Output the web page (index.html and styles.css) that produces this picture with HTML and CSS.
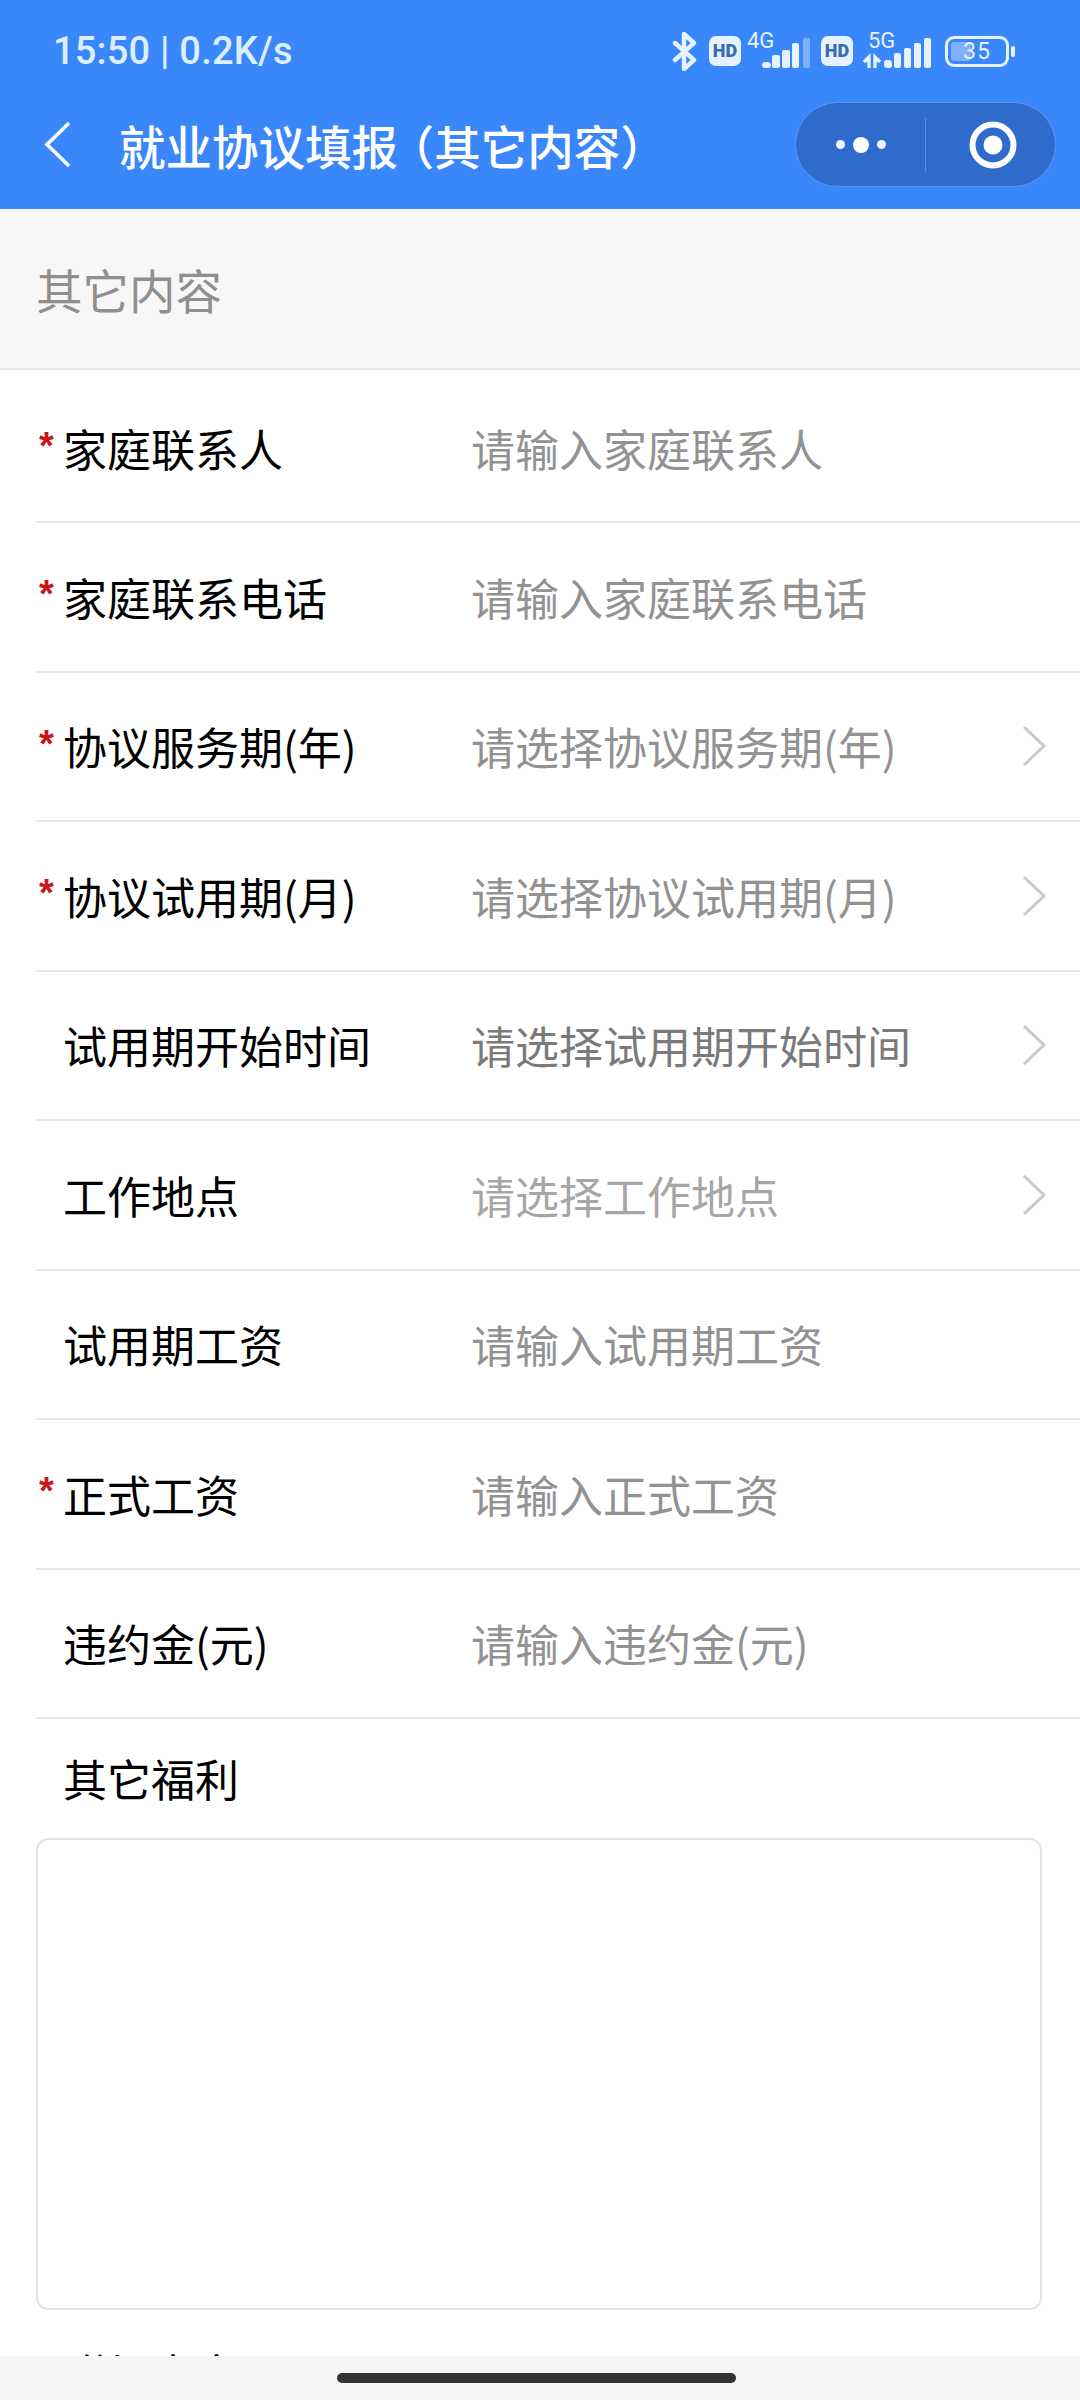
FILE: index.html
```html
<!DOCTYPE html>
<html lang="zh-CN">

<head>
  <meta charset="UTF-8">
  <meta name="viewport" content="width=device-width, initial-scale=1.0">
  <title>就业协议填报（其它内容）</title>
  <link rel="stylesheet" href="styles.css">
</head>

<body>
  <div id="page">
    <header>
      <div class="statusBar">
        <span class="time">15:50 | 0.2K/s</span>
        <div class="statusIcons">
          <svg class="bluetooth" width="25" height="39" viewBox="0 0 25 39">
            <path d="M3 11 L22 28 L12 37 V2 L22 11 L3 28" fill="none" stroke="#e6f2ff" stroke-width="4.4" stroke-linejoin="round" stroke-linecap="round"/>
          </svg>
          <span class="hd">HD</span>
          <svg class="signal" width="68" height="42" viewBox="0 -6 68 42">
            <text x="0" y="16" class="netType">4G</text>
            <rect x="15" y="30" width="9" height="6" rx="3" fill="#e6f2ff"/>
            <rect x="25" y="23" width="8" height="13" rx="2" fill="#e6f2ff"/>
            <rect x="35" y="18" width="8" height="18" rx="2" fill="#e6f2ff"/>
            <rect x="45" y="11" width="7" height="25" rx="2" fill="#e6f2ff"/>
            <rect x="56" y="6" width="7" height="30" rx="2" fill="#7fb0fa"/>
          </svg>
          <span class="hd">HD</span>
          <svg class="signal" width="72" height="42" viewBox="0 -6 72 42">
            <text x="9" y="16" class="netType">5G</text>
            <path d="M5 30 L10 25 V36 M16 36 V25 L21 30" fill="none" stroke="#e6f2ff" stroke-width="3.4"/>
            <rect x="25" y="28" width="8" height="8" rx="3" fill="#e6f2ff"/>
            <rect x="35" y="21" width="7" height="15" rx="2" fill="#e6f2ff"/>
            <rect x="45" y="16" width="7" height="20" rx="2" fill="#e6f2ff"/>
            <rect x="55" y="11" width="7" height="25" rx="2" fill="#e6f2ff"/>
            <rect x="65" y="6" width="7" height="30" rx="2" fill="#e6f2ff"/>
          </svg>
          <div class="battery">
            <div class="batteryBody">
              <div class="batteryFill"></div>
              <span class="batteryText">35</span>
            </div>
            <div class="batteryTip"></div>
          </div>
        </div>
      </div>
      <div class="navBar">
        <svg class="backIcon" width="28" height="47" viewBox="0 0 28 47">
          <path d="M25 2 L3 23.5 L25 45" fill="none" stroke="#ffffff" stroke-width="3.6"/>
        </svg>
        <h1>就业协议填报<span class="paren">（</span>其它内容）</h1>
        <div class="capsule">
          <div class="capsuleBtn">
            <i class="dot"></i><i class="dot big"></i><i class="dot"></i>
          </div>
          <div class="capsuleLine"></div>
          <div class="capsuleBtn">
            <svg class="ring" width="50" height="50" viewBox="0 0 50 50">
              <circle cx="25" cy="25" r="20.5" fill="none" stroke="#ffffff" stroke-width="6"/>
              <circle cx="25" cy="25" r="9.5" fill="#ffffff"/>
            </svg>
          </div>
        </div>
      </div>
    </header>

    <div class="sectionTitle">其它内容</div>

    <div class="form">
      <div class="row first">
        <span class="star">*</span>
        <span class="label">家庭联系人</span>
        <span class="value">请输入家庭联系人</span>
      </div>
      <div class="row">
        <span class="star">*</span>
        <span class="label">家庭联系电话</span>
        <span class="value">请输入家庭联系电话</span>
      </div>
      <div class="row">
        <span class="star">*</span>
        <span class="label">协议服务期(年)</span>
        <span class="value">请选择协议服务期(年)</span>
        <svg class="arrow" width="26" height="42" viewBox="0 0 26 42"><path d="M3 2 L23 21 L3 40" fill="none" stroke="#c9c9c9" stroke-width="3"/></svg>
      </div>
      <div class="row">
        <span class="star">*</span>
        <span class="label">协议试用期(月)</span>
        <span class="value">请选择协议试用期(月)</span>
        <svg class="arrow" width="26" height="42" viewBox="0 0 26 42"><path d="M3 2 L23 21 L3 40" fill="none" stroke="#c9c9c9" stroke-width="3"/></svg>
      </div>
      <div class="row">
        <span class="star"></span>
        <span class="label">试用期开始时间</span>
        <span class="value dark">请选择试用期开始时间</span>
        <svg class="arrow" width="26" height="42" viewBox="0 0 26 42"><path d="M3 2 L23 21 L3 40" fill="none" stroke="#c9c9c9" stroke-width="3"/></svg>
      </div>
      <div class="row">
        <span class="star"></span>
        <span class="label">工作地点</span>
        <span class="value light">请选择工作地点</span>
        <svg class="arrow" width="26" height="42" viewBox="0 0 26 42"><path d="M3 2 L23 21 L3 40" fill="none" stroke="#c9c9c9" stroke-width="3"/></svg>
      </div>
      <div class="row">
        <span class="star"></span>
        <span class="label">试用期工资</span>
        <span class="value">请输入试用期工资</span>
      </div>
      <div class="row">
        <span class="star">*</span>
        <span class="label">正式工资</span>
        <span class="value">请输入正式工资</span>
      </div>
      <div class="row">
        <span class="star"></span>
        <span class="label">违约金(元)</span>
        <span class="value">请输入违约金(元)</span>
      </div>
      <div class="block">
        <div class="blockLabel">其它福利</div>
        <div class="textBox"></div>
      </div>
      <div class="block">
        <div class="blockLabel">附加内容</div>
      </div>
    </div>

    <div class="homeBar"><div class="homeHandle"></div></div>
  </div>
</body>

</html>
```

FILE: styles.css
```css
* {
  box-sizing: border-box;
}

body {
  margin: 0;
  background-color: white;
  font-family: "Noto Sans CJK SC", "Noto Sans", sans-serif;
}

#page {
  position: relative;
  width: 1080px;
  height: 2400px;
  overflow: hidden;
}

header {
  height: 209px;
  background-color: #3a86fb;
  color: white;
}

.statusBar {
  display: flex;
  align-items: center;
  justify-content: space-between;
  height: 102px;
  padding: 0 65px 0 53px;
}

.time {
  font-family: Roboto, sans-serif;
  font-size: 38px;
  font-weight: 500;
  letter-spacing: 0.2px;
  color: #dcefff;
}

.statusIcons {
  display: flex;
  align-items: center;
  gap: 6px;
}

.bluetooth {
  margin-right: 6px;
}

.hd {
  width: 32px;
  height: 30px;
  border-radius: 7px;
  background-color: #e6f2ff;
  color: #3a6cb0;
  font-family: Roboto, sans-serif;
  font-size: 18px;
  font-weight: 900;
  line-height: 30px;
  text-align: center;
}

.signal {
  margin-bottom: 8px;
}

.netType {
  font-family: Roboto, sans-serif;
  font-size: 22px;
  fill: #e6f2ff;
}

.battery {
  display: flex;
  align-items: center;
  gap: 2px;
  margin-left: 8px;
}

.batteryBody {
  position: relative;
  width: 64px;
  height: 31px;
  border: 3px solid #e6f2ff;
  border-radius: 9px;
  text-align: center;
}

.batteryFill {
  position: absolute;
  top: 3px;
  bottom: 3px;
  left: 3px;
  width: 20px;
  border-radius: 3px;
  background-color: #7fb0fa;
}

.batteryText {
  position: relative;
  display: block;
  font-family: Roboto, sans-serif;
  font-size: 23px;
  line-height: 25px;
  letter-spacing: 1px;
  color: #e6f2ff;
}

.batteryTip {
  width: 4px;
  height: 11px;
  border-radius: 2px;
  background-color: #e6f2ff;
}

.navBar {
  display: flex;
  align-items: center;
  height: 85px;
  padding: 0 24px 0 44px;
}

.backIcon {
  flex-shrink: 0;
}

h1 {
  flex: 1;
  margin: 0 0 0 47px;
  font-size: 46.5px;
  font-weight: 500;
  line-height: 85px;
  white-space: nowrap;
}

/* half width bracket, then put a little of the space back */
.paren {
  margin-left: 13px;
  font-feature-settings: "halt";
}

.capsule {
  display: flex;
  align-items: center;
  width: 261px;
  height: 85px;
  border: 1px solid #5c96ee;
  border-radius: 43px;
  background-color: #2f6bcb;
}

.capsuleBtn {
  display: flex;
  flex: 1;
  align-items: center;
  justify-content: center;
  gap: 8px;
}

.capsuleLine {
  width: 1px;
  height: 54px;
  background-color: #5c8fdc;
}

.ring {
  margin-left: 4px;
}

.dot {
  width: 9px;
  height: 9px;
  border-radius: 50%;
  background-color: #eef5ff;
}

.dot.big {
  width: 16px;
  height: 16px;
  background-color: white;
}

.sectionTitle {
  height: 161px;
  padding-left: 36px;
  border-bottom: 2px solid #e6e6e6;
  background-color: #f7f7f7;
  color: #8f8f8f;
  font-size: 46.5px;
  line-height: 160px;
}

.form {
  padding-left: 36px;
}

.row {
  display: flex;
  align-items: center;
  height: 149.5px;
  border-bottom: 2px solid #e6e6e6;
  font-size: 44px;
  line-height: 60px;
}

.row.first {
  height: 153px;
  padding-top: 4px;
}

.star {
  width: 27px;
  flex-shrink: 0;
  align-self: flex-start;
  margin-top: 51px;
  padding-left: 3px;
  font-family: "Liberation Sans", sans-serif;
  font-size: 38px;
  font-weight: bold;
  line-height: 40px;
  color: #c8161d;
}

.row.first .star {
  margin-top: 52px;
}

.label {
  width: 408px;
  flex-shrink: 0;
  color: #000000;
}

.value {
  flex: 1;
  color: #929292;
}

.value.dark {
  color: #7a7a7a;
}

.value.light {
  color: #a6a6a6;
}

.arrow {
  margin-right: 33px;
}

.block {
  padding-right: 38px;
}

.blockLabel {
  padding-left: 27px;
  padding-top: 29px;
  font-size: 44px;
  line-height: 60px;
  color: #000000;
}

.textBox {
  height: 472px;
  margin-top: 30px;
  margin-bottom: 4px;
  border: 2px solid #e3e3e3;
  border-radius: 12px;
}

.homeBar {
  position: absolute;
  left: 0;
  right: 0;
  bottom: 0;
  display: flex;
  justify-content: center;
  height: 44px;
  padding: 17px 7px 0 0;
  background-color: #f5f5f5;
}

.homeHandle {
  width: 399px;
  height: 10px;
  border-radius: 5px;
  background-color: #333333;
}
```
